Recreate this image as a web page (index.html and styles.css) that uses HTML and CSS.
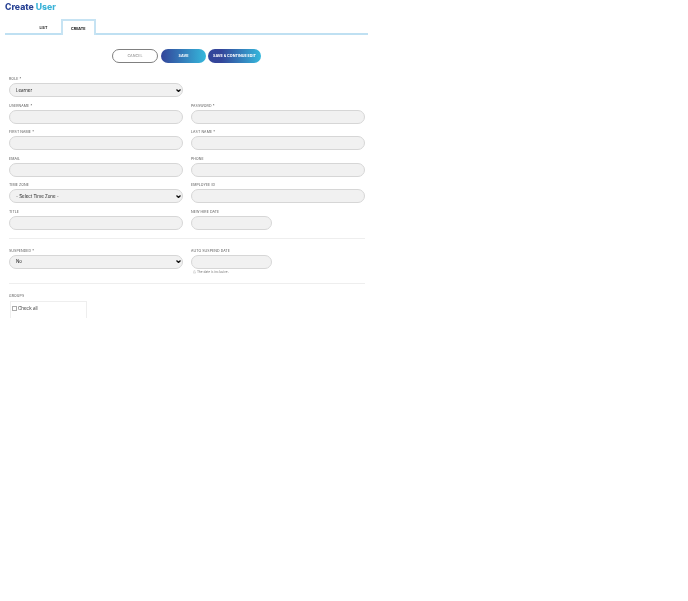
FILE: index.html
```html
<!DOCTYPE html>
<html lang="en">
<head>
<meta charset="utf-8">
<title>Create User</title>
<link rel="stylesheet" href="styles.css">
</head>
<body>
<main class="page">
  <h1 class="title">Create <span class="title-accent">User</span></h1>
  <nav class="tabs">
    <a class="tab">LIST</a>
    <a class="tab tab-active">CREATE</a>
  </nav>
  <div class="actions">
    <button class="btn btn-cancel">CANCEL</button>
    <button class="btn btn-save">SAVE</button>
    <button class="btn btn-continue">SAVE &amp; CONTINUE EDIT</button>
  </div>
  <form class="form">
    <div class="grid">
      <div class="field"><label class="label">ROLE *</label>
        <div class="control control-select"><span>Learner</span><svg class="chev" viewBox="0 0 10 6"><path d="M1 1l4 4 4-4" fill="none" stroke="#111" stroke-width="2.6"/></svg></div></div>
      <div class="field"></div>
      <div class="field"><label class="label">USERNAME *</label><div class="control"></div></div>
      <div class="field"><label class="label">PASSWORD *</label><div class="control"></div></div>
      <div class="field"><label class="label">FIRST NAME *</label><div class="control"></div></div>
      <div class="field"><label class="label">LAST NAME *</label><div class="control"></div></div>
      <div class="field"><label class="label">EMAIL</label><div class="control"></div></div>
      <div class="field"><label class="label">PHONE</label><div class="control"></div></div>
      <div class="field"><label class="label">TIME ZONE</label>
        <div class="control control-select"><span>- Select Time Zone -</span><svg class="chev" viewBox="0 0 10 6"><path d="M1 1l4 4 4-4" fill="none" stroke="#111" stroke-width="2.6"/></svg></div></div>
      <div class="field"><label class="label">EMPLOYEE ID</label><div class="control"></div></div>
      <div class="field"><label class="label">TITLE</label><div class="control"></div></div>
      <div class="field"><label class="label">NEW HIRE DATE</label><div class="control control-short"></div></div>
    </div>
    <hr class="divider divider-first">
    <div class="grid">
      <div class="field"><label class="label">SUSPENDED *</label>
        <div class="control control-select"><span>No</span><svg class="chev" viewBox="0 0 10 6"><path d="M1 1l4 4 4-4" fill="none" stroke="#111" stroke-width="2.6"/></svg></div></div>
      <div class="field"><label class="label">AUTO SUSPEND DATE</label><div class="control control-short"></div>
        <p class="help">&#9432; The date is inclusive.</p></div>
    </div>
    <hr class="divider divider-second">
    <label class="label">GROUPS</label>
    <div class="groups">
      <label class="check"><span class="box"></span>Check all</label>
    </div>
  </form>
</main>
</body>
</html>
```
FILE: styles.css
```css
* { box-sizing: border-box; }
html, body { margin: 0; background: #fff; }
body { width: 688px; height: 601px; overflow: hidden; font-family: "Inter", "Liberation Sans", sans-serif; color: #444; }
.page { padding: 1px 320px 0 5px; height: 601px; filter: blur(.3px); }
.title { margin: 0; height: 12px; font-size: 8.7px; line-height: 12px; font-weight: 800; color: #2a4495; }
.title-accent { color: #3bb3d8; }
.tabs { display: flex; height: 16px; margin-top: 6px; padding-left: 21px; border-bottom: 2px solid #bfe0f2; align-items: stretch; }
.tab { width: 35px; font-size: 3.7px; font-weight: 700; color: #222; display: flex; align-items: center; justify-content: center; padding-top: 2px; }
.tab-active { width: 34.5px; margin-bottom: -2px; padding-top: 0; border: 2px solid #c6e3f3; border-bottom: 0; background: #fff; color: #111; }
.actions { display: flex; justify-content: center; gap: 3px; margin-top: 14px; }
.btn { height: 14px; border: 0; border-radius: 7px; padding: 0 0 1px; font: 700 3.7px "Inter", sans-serif; color: #fff; }
.btn-cancel { width: 46px; background: #fff; border: 1px solid #808080; color: #999; font-weight: 500; }
.btn-save { width: 45px; background: linear-gradient(90deg, #33459a, #35b8dc); }
.btn-continue { width: 53px; margin-left: -1px; background: linear-gradient(90deg, #33459a 25%, #35b8dc); }
.form { padding: 0 3px 0 4px; margin-top: 13px; }
.grid { display: grid; grid-template-columns: 174px 174px; column-gap: 8px; row-gap: 5.5px; }
.field { min-height: 21px; }
.label { display: block; height: 6px; font-size: 3.5px; line-height: 6px; color: #555; letter-spacing: .1px; }
.control { height: 14px; margin-top: 1px; background: #f1f1f1; border: 1px solid #d6d6d6; border-radius: 7px; display: flex; align-items: center; justify-content: space-between; padding: 0 1px 0 6px; font: 4.4px "Inter", sans-serif; color: #222; }
.control-short { width: 81px; }
.chev { width: 5px; height: 3px; }
.divider { border: 0; border-top: 1px solid #eee; margin: 0; }
.divider-first { margin-top: 8px; margin-bottom: 9px; }
.divider-second { margin-top: 9px; margin-bottom: 9px; }
.help { margin: 1px 0 0 2px; font-size: 3.2px; line-height: 4px; color: #777; }
.groups { width: 77px; height: 17px; margin: 2px 0 0 1px; border: 1px solid #eee; border-bottom: 0; padding: 4px 1px 0; overflow: hidden; }
.check { display: flex; align-items: center; gap: 1px; font: 4.5px "Inter", sans-serif; color: #333; }
.box { width: 5px; height: 5px; border: 1px solid #aaa; background: #fff; }
```
